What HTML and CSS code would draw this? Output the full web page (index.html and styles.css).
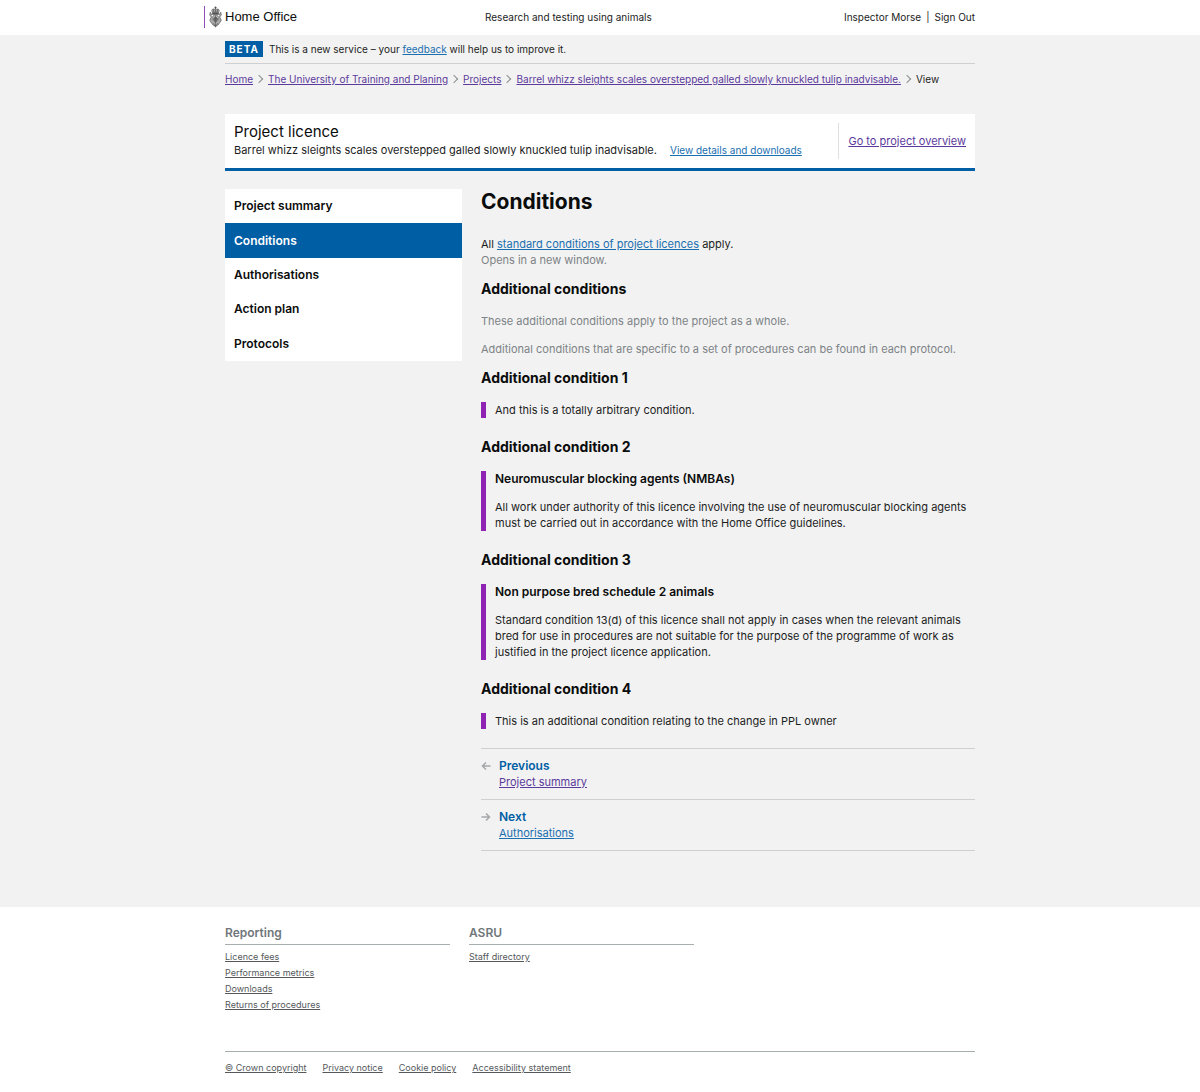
FILE: index.html
```html
<!DOCTYPE html>
<html lang="en">
<head>
<meta charset="utf-8">
<meta name="viewport" content="width=device-width, initial-scale=1">
<title>Conditions - Project licence</title>
<link rel="stylesheet" href="styles.css">
</head>
<body>
<header class="site-header">
  <div class="wrap header-row">
    <a class="logo" href="#">
      <svg class="crest" viewBox="0 0 24 42" aria-hidden="true">
        <g fill="none" stroke="#5a5a5a" stroke-width="1.4">
          <path d="M6 12C3 7 7 4 12 7c5-3 9 0 6 5zM12 7v5M8 6l1 6M16 6l-1 6" fill="#aaa"/>
          <path d="M12 1v5M10 3h4" stroke-width="2"/>
          <path d="M6 13h12v3H6z" fill="#555"/>
          <ellipse cx="12" cy="26" rx="7" ry="9" fill="#bbb"/>
          <ellipse cx="12" cy="26" rx="3.5" ry="5" fill="#777"/>
          <path d="M5 17l-3-5-1 5 3 4-3 6 3 5 4 5M19 17l3-5 1 5-3 4 3 6-3 5-4 5" fill="#aaa"/>
          <path d="M7 35l5 5 5-5M12 35v5" fill="#777"/>
          <path d="M12 18v16M6 25h12"/>
        </g>
      </svg>
      <span>Home Office</span>
    </a>
    <a class="service-name" href="#">Research and testing using animals</a>
    <div class="account"><a href="#">Inspector Morse</a><span>|</span><a href="#">Sign Out</a></div>
  </div>
</header>

<div class="wrap page">
  <div class="phase-banner">
    <strong class="phase-tag">BETA</strong>
    <span>This is a new service – your <a href="#">feedback</a> will help us to improve it.</span>
  </div>

  <nav aria-label="Breadcrumb">
    <ol class="breadcrumbs">
      <li><a href="#">Home</a></li>
      <li><a href="#">The University of Training and Planing</a></li>
      <li><a href="#">Projects</a></li>
      <li><a href="#">Barrel whizz sleights scales overstepped galled slowly knuckled tulip inadvisable.</a></li>
      <li>View</li>
    </ol>
  </nav>

  <section class="licence-panel">
    <div class="licence-info">
      <h2>Project licence</h2>
      <p>Barrel whizz sleights scales overstepped galled slowly knuckled tulip inadvisable. <a href="#">View details and downloads</a></p>
    </div>
    <div class="licence-action"><a class="visited" href="#">Go to project overview</a></div>
  </section>

  <div class="columns">
    <nav aria-label="Sections">
      <ul class="section-nav">
        <li><a href="#">Project summary</a></li>
        <li><a class="active" href="#" aria-current="page">Conditions</a></li>
        <li><a href="#">Authorisations</a></li>
        <li><a href="#">Action plan</a></li>
        <li><a href="#">Protocols</a></li>
      </ul>
    </nav>

    <main class="content">
      <h1>Conditions</h1>
      <p>All <a href="#">standard conditions of project licences</a> apply.<br><span class="hint">Opens in a new window.</span></p>
      <h2>Additional conditions</h2>
      <p class="hint">These additional conditions apply to the project as a whole.</p>
      <p class="hint">Additional conditions that are specific to a set of procedures can be found in each protocol.</p>

      <h2>Additional condition 1</h2>
      <div class="condition"><p>And this is a totally arbitrary condition.</p></div>

      <h2>Additional condition 2</h2>
      <div class="condition">
        <h3>Neuromuscular blocking agents (NMBAs)</h3>
        <p>All work under authority of this licence involving the use of neuromuscular blocking agents must be carried out in accordance with the Home Office guidelines.</p>
      </div>

      <h2>Additional condition 3</h2>
      <div class="condition">
        <h3>Non purpose bred schedule 2 animals</h3>
        <p>Standard condition 13(d) of this licence shall not apply in cases when the relevant animals bred for use in procedures are not suitable for the purpose of the programme of work as justified in the project licence application.</p>
      </div>

      <h2>Additional condition 4</h2>
      <div class="condition"><p>This is an additional condition relating to the change in PPL owner</p></div>

      <nav class="pager" aria-label="Pagination">
        <div class="pager-item">
          <svg viewBox="0 0 10 10" aria-hidden="true"><path d="M9.500 5H1.500M5 1.500L1.500 5L5 8.500"/></svg>
          <div><strong>Previous</strong><a class="visited" href="#">Project summary</a></div>
        </div>
        <div class="pager-item">
          <svg viewBox="0 0 10 10" aria-hidden="true"><path d="M0.500 5H8.500M5 1.500L8.500 5L5 8.500"/></svg>
          <div><strong>Next</strong><a href="#">Authorisations</a></div>
        </div>
      </nav>
    </main>
  </div>
</div>

<footer class="site-footer">
  <div class="wrap">
    <div class="footer-columns">
      <section>
        <h2>Reporting</h2>
        <ul>
          <li><a href="#">Licence fees</a></li>
          <li><a href="#">Performance metrics</a></li>
          <li><a href="#">Downloads</a></li>
          <li><a href="#">Returns of procedures</a></li>
        </ul>
      </section>
      <section>
        <h2>ASRU</h2>
        <ul>
          <li><a href="#">Staff directory</a></li>
        </ul>
      </section>
    </div>
    <ul class="footer-meta">
      <li><a href="#">© Crown copyright</a></li>
      <li><a href="#">Privacy notice</a></li>
      <li><a href="#">Cookie policy</a></li>
      <li><a href="#">Accessibility statement</a></li>
    </ul>
  </div>
</footer>
</body>
</html>
```
FILE: styles.css
```css
* {
  box-sizing: border-box;
}

body {
  margin: 0;
  background: #f2f2f2;
  color: #1c1d1d;
  font: 11px/16px Inter, "Liberation Sans", sans-serif;
}

h1, h2, h3, p, ul, ol {
  margin: 0;
  padding: 0;
}

h1, h2, h3 {
  color: #0b0c0c;
}

ul, ol {
  list-style: none;
}

a {
  color: #1a6fb0;
}

a.visited,
.breadcrumbs a {
  color: #5c3a9c;
}

.wrap {
  max-width: 750px;
  margin: 0 auto;
}

/* Header */

.site-header,
.site-footer {
  background: #fff;
}

.header-row {
  display: grid;
  grid-template-columns: 260px 1fr auto;
  align-items: center;
  padding: 6px 0 7px;
  font-size: 10px;
}

.header-row a {
  color: inherit;
  text-decoration: none;
}

.header-row .logo {
  display: flex;
  align-items: center;
  gap: 3px;
  height: 22px;
  margin-left: -21px;
  padding-left: 4px;
  border-left: 1px solid #8f4bb5;
  color: #0b0c0c;
  font: 13px/16px "Liberation Sans", sans-serif;
}

.crest {
  width: 13px;
  height: 22px;
}

.account {
  display: flex;
  gap: 5px;
}

/* Page body */

.page {
  padding-bottom: 56px;
}

.phase-banner {
  display: flex;
  align-items: center;
  gap: 6px;
  padding: 6px 0;
  border-bottom: 1px solid #cfd0d1;
  font-size: 10px;
}

.phase-tag {
  padding: 0 4px;
  background: #005ea5;
  color: #fff;
  font-weight: 700;
  letter-spacing: 1px;
}

.breadcrumbs {
  display: flex;
  flex-wrap: wrap;
  padding: 7px 0;
  font-size: 10px;
}

.breadcrumbs li {
  display: flex;
  align-items: center;
}

.breadcrumbs li + li::before {
  content: "";
  width: 5px;
  height: 5px;
  margin: 0 6px 0 3px;
  border: solid #8a8f92;
  border-width: 1px 1px 0 0;
  transform: rotate(45deg);
}

.licence-panel {
  display: flex;
  margin-top: 20px;
  padding: 9px;
  background: #fff;
  border-bottom: 3px solid #005ea5;
}

.licence-info {
  flex: 1;
}

.licence-info h2 {
  font-size: 15px;
  font-weight: 400;
  line-height: 18px;
}

.licence-info p {
  line-height: 18px;
}

.licence-info a {
  margin-left: 10px;
  font-size: 10px;
}

.licence-action {
  display: flex;
  align-items: center;
  padding-left: 9px;
  border-left: 1px solid #dee0e2;
}

.columns {
  display: grid;
  grid-template-columns: 237px 1fr;
  gap: 19px;
  align-items: start;
  margin-top: 18px;
}

.section-nav {
  display: flex;
  flex-direction: column;
  min-height: 172px;
  background: #fff;
  font-size: 12px;
}

.section-nav li {
  display: flex;
  flex: 1;
}

.section-nav a {
  display: flex;
  flex: 1;
  align-items: center;
  padding: 9px;
  color: #0b0c0c;
  font-weight: 600;
  text-decoration: none;
}

.section-nav .active {
  background: #005ea5;
  color: #fff;
}

.content h1 {
  margin-bottom: 21px;
  font-size: 21px;
  line-height: 26px;
}

.content h2 {
  margin: 11px 0 14px;
  font-size: 14px;
  line-height: 20px;
}

.content h3 {
  margin-bottom: 12px;
  font-size: 12px;
  font-weight: 600;
  line-height: 16px;
}

.content p + p {
  margin-top: 12px;
}

.hint {
  color: #7d8386;
}

.condition {
  margin-bottom: 19px;
  padding-left: 9px;
  border-left: 5px solid #8f23b3;
}

.pager {
  border-top: 1px solid #cfd0d1;
}

.pager-item {
  display: flex;
  gap: 8px;
  padding: 9px 0;
  border-bottom: 1px solid #cfd0d1;
}

.pager-item svg {
  width: 10px;
  height: 10px;
  margin-top: 3px;
  fill: none;
  stroke: #a5a8aa;
  stroke-width: 1.5;
}

.pager-item strong {
  display: block;
  color: #005ea5;
  font-size: 12px;
  font-weight: 600;
}

/* Footer */

.site-footer {
  padding: 18px 0 17px;
  font-size: 9px;
}

.site-footer a {
  color: #55595c;
}

.footer-columns {
  display: grid;
  grid-template-columns: 225px 225px;
  gap: 19px;
}

.footer-columns h2 {
  margin-bottom: 4px;
  padding-bottom: 3px;
  border-bottom: 1px solid #a8adb0;
  color: #6f777b;
  font-size: 12px;
  font-weight: 600;
}

.footer-meta {
  display: flex;
  gap: 16px;
  margin-top: 38px;
  padding-top: 8px;
  border-top: 1px solid #a8adb0;
}
```
